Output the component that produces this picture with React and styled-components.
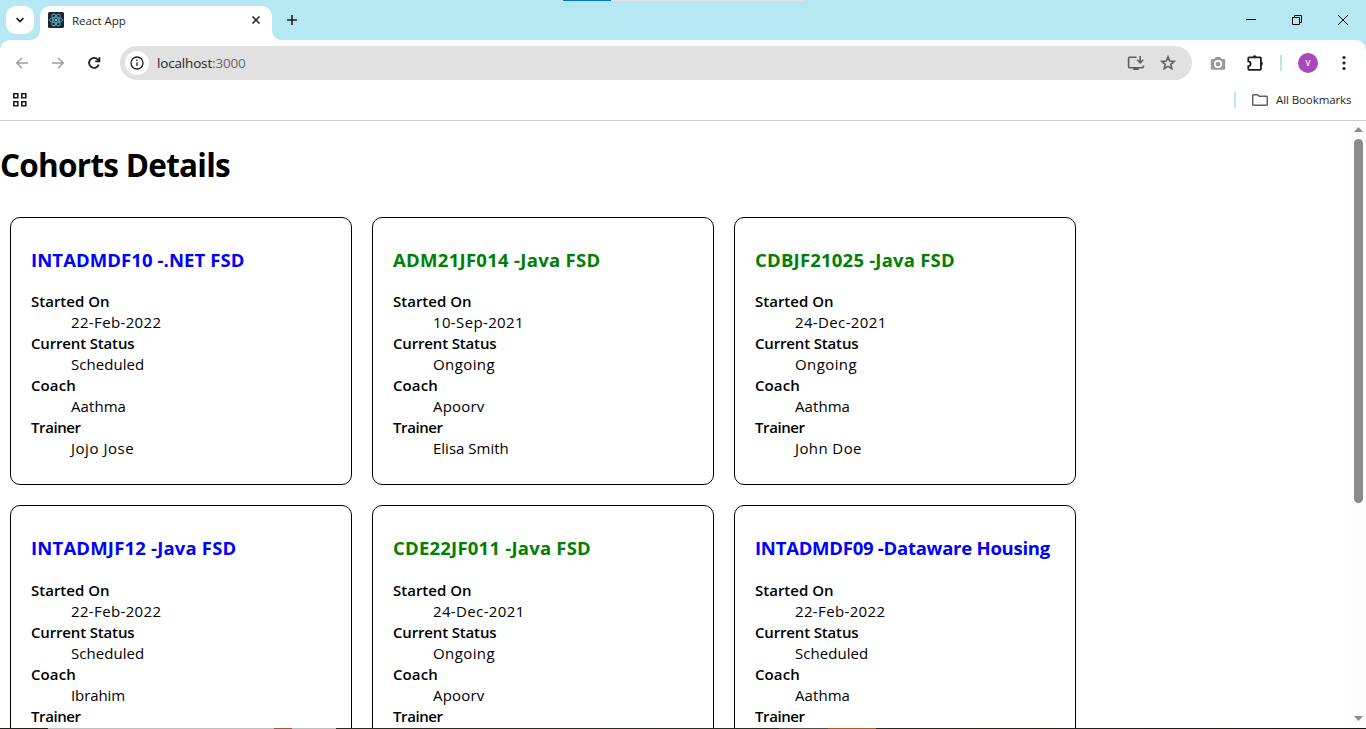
import React from "react";
import styled, { createGlobalStyle } from "styled-components";

const GlobalStyle = createGlobalStyle`
  * { box-sizing: border-box; }
  body {
    margin: 0;
    background: #fff;
    overflow: hidden;
    font-family: "Open Sans", "Noto Sans", sans-serif;
    color: #000;
  }
`;

/* ---------- browser window ---------- */

const Window = styled.div`
  display: flex;
  flex-direction: column;
  width: 1366px;
  height: 729px;
  overflow: hidden;
  background: #b5e8f3;
  position: relative;
`;

const ProgressStrip = styled.div`
  position: absolute;
  top: 0;
  left: 563px;
  width: 241px;
  height: 1px;
  background: linear-gradient(to right, #0078d7 48px, #e1e1e1 48px);
`;

const TabStrip = styled.div`
  display: flex;
  height: 40px;
  flex: none;
  padding: 6px 0 0 6px;
`;

const TabSearch = styled.div`
  width: 28px;
  height: 28px;
  border-radius: 10px;
  background: #fff;
  margin-right: 6px;
`;

const Tab = styled.div`
  position: relative;
  display: flex;
  align-items: center;
  width: 232px;
  height: 34px;
  padding: 0 8px 6px;
  border-radius: 10px 10px 0 0;
  background: #fff;

  &::before,
  &::after {
    content: "";
    position: absolute;
    bottom: 0;
    width: 10px;
    height: 10px;
  }
  &::before {
    left: -10px;
    background: radial-gradient(circle at 0 0, transparent 9.5px, #fff 10.5px);
  }
  &::after {
    right: -10px;
    background: radial-gradient(circle at 100% 0, transparent 9.5px, #fff 10.5px);
  }
`;

const TabTitle = styled.span`
  flex: 1;
  margin-left: 8px;
  padding-top: 1px;
  font-size: 11.5px;
  line-height: 16px;
  color: #1f1f1f;
`;

const NewTab = styled.div`
  display: flex;
  align-items: center;
  height: 28px;
  padding-left: 12px;
`;

const WindowControls = styled.div`
  display: flex;
  margin-left: auto;
  margin-top: -6px;
`;

const ControlSlot = styled.div`
  display: flex;
  align-items: center;
  justify-content: center;
  width: 46px;
  height: 40px;
`;

const Chrome = styled.div`
  flex: none;
  height: 81px;
  background: #fff;
  border-bottom: 1px solid #cdcdcd;
  border-radius: 10px 10px 0 0;
`;

const Toolbar = styled.div`
  display: flex;
  align-items: center;
  height: 46px;
  padding-left: 4px;
`;

const Slot = styled.div`
  display: flex;
  align-items: center;
  justify-content: center;
  flex: none;
  width: ${(p) => p.$width || 36}px;
  height: 34px;
`;

const Omnibox = styled.div`
  display: flex;
  align-items: center;
  width: 1072px;
  height: 34px;
  margin: 0 8px;
  padding: 0 8px 0 5px;
  border-radius: 17px;
  background: #e1e1e1;
`;

const SiteInfo = styled.div`
  display: flex;
  align-items: center;
  justify-content: center;
  width: 24px;
  height: 24px;
  border-radius: 50%;
  background: #fff;
`;

const Address = styled.span`
  flex: 1;
  margin-left: 8px;
  font-size: 13.5px;
  line-height: 20px;
  letter-spacing: -0.17px;
  color: #1f1f1f;

  span {
    color: #6a6a6a;
  }
`;

const Separator = styled.div`
  flex: none;
  width: 2px;
  height: 16px;
  background: #b5e8f3;
  margin: ${(p) => p.$margin};
`;

const Avatar = styled.div`
  width: 20px;
  height: 20px;
  border-radius: 50%;
  background: #ab47bc;
  color: #fff;
  font-size: 8px;
  font-weight: 600;
  line-height: 20px;
  text-align: center;
`;

const BookmarksBar = styled.div`
  display: flex;
  align-items: center;
  height: 28px;
  padding: 0 14px 0 12px;
`;

const BookmarksLabel = styled.span`
  margin-left: 8px;
  width: 76px;
  white-space: nowrap;
  font-size: 11.5px;
  line-height: 16px;
  letter-spacing: -0.09px;
  color: #1f1f1f;
`;

/* ---------- page ---------- */

const Viewport = styled.div`
  display: flex;
  flex: none;
  height: 607px;
  overflow: hidden;
  background: #fff;
`;

const Page = styled.main`
  flex: 1;
  overflow: hidden;
`;

const Heading = styled.h1`
  margin: 22px 0 21px;
  font-size: 31.5px;
  line-height: 43px;
  letter-spacing: -0.74px;
  font-weight: 700;
`;

const Cards = styled.div`
  display: grid;
  grid-template-columns: repeat(3, 342px);
  gap: 20px;
  padding: 10px;
`;

const Card = styled.section`
  height: 268.4px;
  padding: 10px 20px;
  border: 1px solid #000;
  border-radius: 10px;
`;

const CardTitle = styled.h3`
  margin: 19px 0 19.2px;
  font-size: 18.5px;
  line-height: 25px;
  font-weight: 700;
  white-space: nowrap;
  letter-spacing: ${(p) => p.$track}px;
  color: ${(p) => (p.$ongoing ? "green" : "blue")};
`;

const Details = styled.dl`
  margin: 0;
  font-size: 15px;
  line-height: 21px;
`;

const Term = styled.dt`
  font-weight: 600;
  letter-spacing: ${(p) => p.$track}px;
`;

const Value = styled.dd`
  margin: 0 0 0 40px;
  letter-spacing: ${(p) => p.$track || 0}px;
`;

const Scrollbar = styled.div`
  display: flex;
  flex-direction: column;
  align-items: center;
  flex: none;
  width: 15px;
  padding: 6px 0 7px;
  background: #fcfcfc;
`;

const Arrow = styled.svg`
  display: block;
  flex: none;
  fill: #8b8b8b;
`;

const Thumb = styled.div`
  width: 9px;
  height: 364px;
  margin: 7px 0 auto;
  border-radius: 5px;
  background: #8b8b8b;
`;

const Taskbar = styled.div`
  flex: none;
  height: 1px;
  background: linear-gradient(
    to right,
    #1d2118 48px, #bfbfbf 48px, #bfbfbf 274px, #9c5a38 274px, #9c5a38 292px,
    #bfbfbf 292px, #bfbfbf 336px, #272b1d 336px, #22301d 779px, #4c4f42 779px,
    #4c4f42 828px, #a85c22 828px, #a85c22 876px, #26291d 876px, #161616
  );
`;

/* ---------- icons ---------- */

const Svg = styled.svg`
  display: block;
  flex: none;
`;

const Stroke = ({ size = 20, color = "#1f1f1f", width = 1.6, children }) => (
  <Svg width={size} height={size} viewBox={`0 0 ${size} ${size}`} fill="none" stroke={color} strokeWidth={width}>
    {children}
  </Svg>
);

const ReactLogo = () => (
  <Svg width="16" height="16" viewBox="0 0 16 16">
    <rect width="16" height="16" rx="1.5" fill="#20232a" />
    <g fill="none" stroke="#4fb3cd" strokeWidth="0.9">
      <ellipse cx="8" cy="8" rx="6.6" ry="2.6" />
      <ellipse cx="8" cy="8" rx="6.6" ry="2.6" transform="rotate(60 8 8)" />
      <ellipse cx="8" cy="8" rx="6.6" ry="2.6" transform="rotate(120 8 8)" />
    </g>
    <circle cx="8" cy="8" r="1.3" fill="#61dafb" />
  </Svg>
);

const cohorts = [
  { code: "INTADMDF10", track: 0.09, course: ".NET FSD", date: "22-Feb-2022", status: "Scheduled", coach: "Aathma", trainer: "Jojo Jose" },
  { code: "ADM21JF014", track: 0.29, course: "Java FSD", date: "10-Sep-2021", status: "Ongoing", coach: "Apoorv", trainer: "Elisa Smith" },
  { code: "CDBJF21025", track: 0.21, course: "Java FSD", date: "24-Dec-2021", status: "Ongoing", coach: "Aathma", trainer: "John Doe" },
  { code: "INTADMJF12", track: 0.18, course: "Java FSD", date: "22-Feb-2022", status: "Scheduled", coach: "Ibrahim" },
  { code: "CDE22JF011", track: 0.22, course: "Java FSD", date: "24-Dec-2021", status: "Ongoing", coach: "Apoorv" },
  { code: "INTADMDF09", track: -0.25, course: "Dataware Housing", date: "22-Feb-2022", status: "Scheduled", coach: "Aathma" },
];

const tracking = {
  "22-Feb-2022": 0.36,
  "10-Sep-2021": 0.36,
  "24-Dec-2021": 0.36,
  Scheduled: 0.06,
  Ongoing: 0.4,
  Aathma: 0.07,
  Apoorv: 0.2,
  Ibrahim: -0.1,
  "Jojo Jose": 0.53,
  "John Doe": 0.4,
};

const CohortCard = ({ cohort }) => (
  <Card>
    <CardTitle $ongoing={cohort.status === "Ongoing"} $track={cohort.track}>
      {`${cohort.code} -${cohort.course}`}
    </CardTitle>
    <Details>
      <Term $track={0}>Started On</Term>
      <Value $track={tracking[cohort.date]}>{cohort.date}</Value>
      <Term $track={-0.16}>Current Status</Term>
      <Value $track={tracking[cohort.status]}>{cohort.status}</Value>
      <Term $track={0.1}>Coach</Term>
      <Value $track={tracking[cohort.coach]}>{cohort.coach}</Value>
      <Term $track={-0.4}>Trainer</Term>
      {cohort.trainer && <Value $track={tracking[cohort.trainer]}>{cohort.trainer}</Value>}
    </Details>
  </Card>
);

export default function App() {
  return (
    <Window>
      <GlobalStyle />
      <ProgressStrip />
      <TabStrip>
        <TabSearch>
          <Stroke size={28} width={1.8}><path d="M10.6 12.2 14 15.6l3.4-3.4" /></Stroke>
        </TabSearch>
        <Tab>
          <ReactLogo />
          <TabTitle>React App</TabTitle>
          <Stroke size={16} width={1.5}><path d="m4.5 4.5 7 7m0-7-7 7" /></Stroke>
        </Tab>
        <NewTab>
          <Stroke size={16} width={1.6}><path d="M8 3v10M3 8h10" /></Stroke>
        </NewTab>
        <WindowControls>
          <ControlSlot><Stroke size={12} color="#000" width={1}><path d="M1 5.5h10" /></Stroke></ControlSlot>
          <ControlSlot>
            <Stroke size={12} color="#000" width={1}>
              <path d="M1.5 3.5h7v7h-7zM3.5 3.5v-2h7v7h-2" />
            </Stroke>
          </ControlSlot>
          <ControlSlot><Stroke size={12} color="#000" width={1}><path d="m1 1 10 10M11 1 1 11" /></Stroke></ControlSlot>
        </WindowControls>
      </TabStrip>

      <Chrome>
        <Toolbar>
          <Slot><Stroke color="#a0a0a0" width={1.5}><path d="M16 10H5M10 4.8 4.8 10l5.2 5.2" /></Stroke></Slot>
          <Slot><Stroke color="#a0a0a0" width={1.5}><path d="M4 10h11M10 4.8l5.2 5.2-5.2 5.2" /></Stroke></Slot>
          <Slot><Stroke width={1.8}><path d="M14.8 11.6a5 5 0 1 1-1.1-5.2l1.5 1.6M15.4 4.2v4.2h-4.2" /></Stroke></Slot>
          <Omnibox>
            <SiteInfo>
              <Stroke size={16} width={1.3}>
                <circle cx="8" cy="8" r="6" />
                <path d="M8 7.2v3.8M8 4.6v1.5" />
              </Stroke>
            </SiteInfo>
            <Address>localhost<span>:3000</span></Address>
            <Slot $width={32}>
              <Stroke color="#5f5f5f" width={1.6}>
                <path d="M10.6 4.2H3.6a1 1 0 0 0-1 1v8.6a1 1 0 0 0 1 1h12.8a1 1 0 0 0 1-1v-1.4M14.2 3v6.4M11.2 6.8l3 3 3-3" />
                <path d="M7.2 16h5.6" strokeWidth="2" />
              </Stroke>
            </Slot>
            <Slot $width={32}>
              <Stroke color="#5f5f5f" width={1.6}>
                <path d="m10 3.9 1.7 4.1 4.5.4-3.4 2.9 1 4.4-3.8-2.3-3.8 2.3 1-4.4-3.4-2.9 4.5-.4z" />
              </Stroke>
            </Slot>
          </Omnibox>
          <Slot>
            <Svg width="20" height="20" viewBox="0 0 20 20">
              <path d="M4 6h2.4l1.2-2h4.8l1.2 2H16a1.2 1.2 0 0 1 1.2 1.2v8.4a1.2 1.2 0 0 1-1.2 1.2H4a1.2 1.2 0 0 1-1.2-1.2V7.2A1.2 1.2 0 0 1 4 6z" fill="#9a9a9a" />
              <circle cx="10" cy="11" r="3.2" fill="#9a9a9a" stroke="#fff" strokeWidth="1.7" />
            </Svg>
          </Slot>
          <Slot $width={38}>
            <Stroke width={1.8}>
              <path d="M4 4.4h11.2a.7.7 0 0 1 .7.7v11a.7.7 0 0 1-.7.7H4a.7.7 0 0 1-.7-.7v-3c1.4 0 2.3-1 2.3-2.4S4.7 8.3 3.3 8.3V5.1a.7.7 0 0 1 .7-.7z" />
              <path d="M7.7 4.2a1.9 1.9 0 0 1 3.8 0zM16 8.7a1.9 1.9 0 0 1 0 3.8z" fill="#1f1f1f" stroke="none" />
            </Stroke>
          </Slot>
          <Separator $margin="0 8px 0 6px" />
          <Slot><Avatar>V</Avatar></Slot>
          <Slot>
            <Svg width="20" height="20" viewBox="0 0 20 20" fill="#1f1f1f">
              <circle cx="10" cy="4.5" r="1.6" />
              <circle cx="10" cy="10" r="1.6" />
              <circle cx="10" cy="15.5" r="1.6" />
            </Svg>
          </Slot>
        </Toolbar>
        <BookmarksBar>
          <Stroke size={16} width={1.6}>
            <path d="M1.8 1.8h4v4h-4zM9.8 1.8h4v4h-4zM1.8 9.8h4v4h-4zM9.8 9.8h4v4h-4z" />
          </Stroke>
          <Separator $margin="0 16px 0 auto" />
          <Stroke size={16} color="#5f5f5f" width={1.5}>
            <path d="M1.7 2.7h4l1.5 1.6h7.1a1 1 0 0 1 1 1v7a1 1 0 0 1-1 1H1.7a1 1 0 0 1-1-1V3.7a1 1 0 0 1 1-1z" />
          </Stroke>
          <BookmarksLabel>All Bookmarks</BookmarksLabel>
        </BookmarksBar>
      </Chrome>

      <Viewport>
        <Page>
          <Heading>Cohorts Details</Heading>
          <Cards>
            {cohorts.map((cohort) => (
              <CohortCard key={cohort.code} cohort={cohort} />
            ))}
          </Cards>
        </Page>
        <Scrollbar>
          <Arrow width="9" height="5" viewBox="0 0 9 5"><path d="M4.5 0 9 5H0z" /></Arrow>
          <Thumb />
          <Arrow width="9" height="5" viewBox="0 0 9 5"><path d="M0 0h9L4.5 5z" /></Arrow>
        </Scrollbar>
      </Viewport>
      <Taskbar />
    </Window>
  );
}
